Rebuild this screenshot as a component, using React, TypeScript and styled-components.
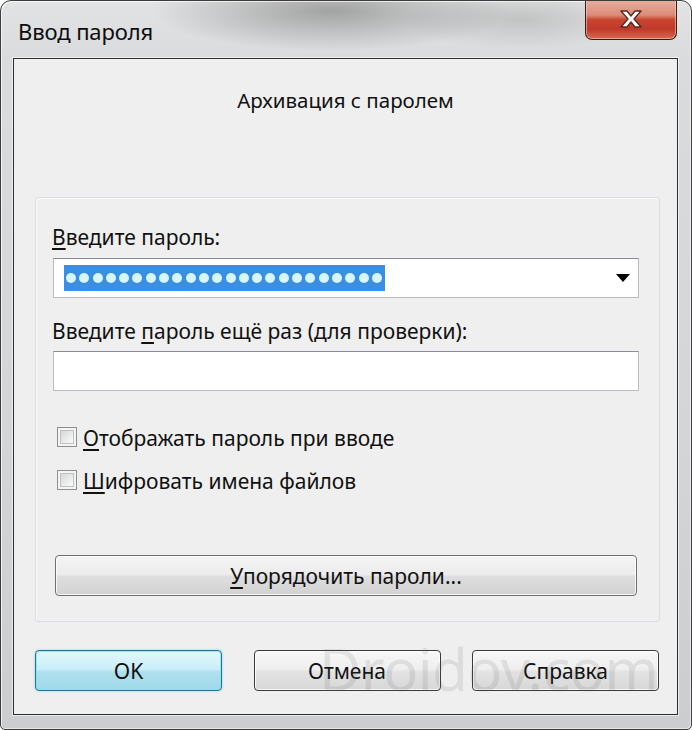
import React from "react";
import styled, { createGlobalStyle, css } from "styled-components";

const GlobalStyle = createGlobalStyle`
  html, body { margin: 0; padding: 0; background: #ffffff; }
  body { font-family: "Noto Sans", "DejaVu Sans", sans-serif; color: #111; }
  * { box-sizing: border-box; }
`;

const Window = styled.div`
  position: relative;
  width: 692px;
  height: 730px;
  border: 1px solid #3c3c3c;
  border-radius: 11px 11px 5px 5px;
  overflow: hidden;
  padding: 0 13px 14px 12px;
  display: flex;
  flex-direction: column;
  background:
    radial-gradient(ellipse 180px 40px at 330px 10px, rgba(110, 110, 110, 0.55), rgba(110, 110, 110, 0) 100%),
    radial-gradient(ellipse 120px 30px at 520px 18px, rgba(150, 150, 150, 0.4), rgba(150, 150, 150, 0) 100%),
    linear-gradient(180deg, #e2e3e4 0%, #d9dbdc 8%, #d3d5d7 60%, #cbcdcf 100%);
  box-shadow: inset 1px 1px 0 rgba(255, 255, 255, 0.7), inset -1px -1px 0 rgba(255, 255, 255, 0.5);
`;

const TitleBar = styled.div`
  height: 57px;
  flex: none;
  display: flex;
  align-items: flex-start;
  padding-left: 5px;
`;

const Title = styled.div`
  margin-top: 15px;
  font-size: 22px;
  line-height: 30px;
  color: #0d0d0d;
  letter-spacing: -0.1px;
`;

const CloseButton = styled.div`
  margin-left: auto;
  margin-right: 1px;
  margin-top: -2px;
  width: 92px;
  height: 41px;
  border: 1px solid #3b1c18;
  border-top: none;
  border-radius: 0 0 7px 7px;
  display: flex;
  align-items: center;
  justify-content: center;
  background: linear-gradient(180deg, #e9b0a2 0%, #dc8c78 40%, #c8452f 52%, #c0392a 75%, #d86a50 100%);
  box-shadow: inset 0 0 0 1px rgba(255, 210, 200, 0.55);
`;

const Client = styled.div`
  flex: 1;
  position: relative;
  display: flex;
  flex-direction: column;
  background: #efefef;
  border: 1px solid #2e2e2e;
  box-shadow: 0 0 0 1px rgba(255, 255, 255, 0.6);
`;

const Header = styled.div`
  height: 138px;
  flex: none;
  padding-top: 26px;
  text-align: center;
  font-size: 20.5px;
  line-height: 30px;
  color: #111;
`;

const Panel = styled.div`
  margin: 0 17px 0 21px;
  height: 425px;
  flex: none;
  display: flex;
  flex-direction: column;
  padding: 25px 20px 0 16px;
  border: 1px solid #d7dde2;
  border-radius: 3px;
  box-shadow: inset 1px 1px 0 #fafafa;
`;

const Label = styled.div<{ $gap: number }>`
  margin-top: ${(p) => p.$gap}px;
  font-size: 21px;
  line-height: 28px;
  color: #111;
  white-space: nowrap;
`;

const Key = styled.span`
  text-decoration: underline;
  text-underline-offset: 3px;
  text-decoration-thickness: 1.5px;
`;

const Field = styled.div<{ $gap: number }>`
  margin-top: ${(p) => p.$gap}px;
  margin-left: 1px;
  height: 40px;
  display: flex;
  align-items: center;
  padding: 0 10px;
  background: #ffffff;
  border: 1px solid #b9bcc2;
  border-top-color: #8a8d93;
`;

const Selection = styled.div`
  height: 26px;
  display: flex;
  align-items: center;
  gap: 3.3px;
  padding: 0 3px 0 2px;
  background: #3a8fe3;
`;

const Dot = styled.span`
  width: 10px;
  height: 10px;
  border-radius: 50%;
  background: #d6f6ff;
`;

const Arrow = styled.svg`
  margin-left: auto;
  margin-right: -3px;
`;

const CheckRow = styled.div<{ $gap: number }>`
  margin-top: ${(p) => p.$gap}px;
  margin-left: 5px;
  height: 28px;
  display: flex;
  align-items: center;
  gap: 6px;
  font-size: 21px;
  color: #111;
  white-space: nowrap;
`;

const CheckBox = styled.span`
  flex: none;
  width: 20px;
  height: 20px;
  margin-top: -3px;
  border: 1px solid #8e8f8f;
  background: #f4f4f4;
  padding: 2px;
  display: flex;
  &::after {
    content: "";
    flex: 1;
    border: 1px solid #bfc1c3;
    background: linear-gradient(135deg, #d6d7d9 0%, #eceded 60%, #fbfbfb 100%);
  }
`;

const buttonBase = css`
  height: 41px;
  border-radius: 4px;
  display: flex;
  align-items: center;
  justify-content: center;
  font-size: 21px;
  color: #111;
  font-family: "Noto Sans", "DejaVu Sans", sans-serif;
`;

const WideButton = styled.div`
  ${buttonBase};
  margin: 60px 2px 0 3px;
  border: 1px solid #6f6f6f;
  background: linear-gradient(180deg, #f4f4f4 0%, #ececec 48%, #dedede 52%, #d2d2d2 100%);
  box-shadow: inset 0 0 0 1px rgba(255, 255, 255, 0.8);
`;

const Footer = styled.div`
  position: relative;
  margin-top: 28px;
  padding: 0 18px 0 21px;
  display: flex;
  justify-content: space-between;
`;

const DialogButton = styled.div<{ $default?: boolean }>`
  ${buttonBase};
  width: 187px;
  border: 1px solid ${(p) => (p.$default ? "#2b6f8c" : "#3a3a3a")};
  background: ${(p) =>
    p.$default
      ? "linear-gradient(180deg, #e4f7fc 0%, #c9eef8 46%, #aee0ee 54%, #9fd9ea 100%)"
      : "linear-gradient(180deg, #f7f7f7 0%, #efefef 46%, #e2e2e2 54%, #d7d7d7 100%)"};
  box-shadow: ${(p) =>
    p.$default
      ? "inset 0 0 0 1px rgba(120, 230, 255, 0.7), 0 0 3px rgba(90, 200, 240, 0.6)"
      : "inset 0 0 0 1px rgba(255, 255, 255, 0.85)"};
`;

const Watermark = styled.div`
  position: absolute;
  left: 318px;
  top: 633px;
  font-size: 58px;
  line-height: 70px;
  color: rgba(90, 90, 90, 0.13);
  letter-spacing: -0.5px;
  pointer-events: none;
`;

export default function App() {
  const dots = Array.from({ length: 24 });
  return (
    <>
      <GlobalStyle />
      <Window>
        <TitleBar>
          <Title>Ввод пароля</Title>
          <CloseButton>
            <svg width="30" height="22" viewBox="0 0 30 22">
              <path
                d="M5 3 H11 L15 8 L19 3 H25 L18 11 L25 19 H19 L15 14 L11 19 H5 L12 11 Z"
                fill="#ffffff"
                stroke="#5a2a22"
                strokeWidth="1.4"
                strokeLinejoin="round"
              />
            </svg>
          </CloseButton>
        </TitleBar>
        <Client>
          <Header>Архивация с паролем</Header>
          <Panel>
            <Label $gap={0}>
              <Key>В</Key>ведите пароль:
            </Label>
            <Field $gap={7}>
              <Selection>
                {dots.map((_, i) => (
                  <Dot key={i} />
                ))}
              </Selection>
              <Arrow width="16" height="10" viewBox="0 0 16 10">
                <path d="M1 1 H15 L8 9 Z" fill="#000" />
              </Arrow>
            </Field>
            <Label $gap={19}>
              Введите <Key>п</Key>ароль ещё раз (для проверки):
            </Label>
            <Field $gap={6} />
            <CheckRow $gap={33}>
              <CheckBox />
              <span>
                <Key>О</Key>тображать пароль при вводе
              </span>
            </CheckRow>
            <CheckRow $gap={15}>
              <CheckBox />
              <span>
                <Key>Ш</Key>ифровать имена файлов
              </span>
            </CheckRow>
            <WideButton>
              <span>
                <Key>У</Key>порядочить пароли...
              </span>
            </WideButton>
          </Panel>
          <Footer>
            <DialogButton $default>OK</DialogButton>
            <DialogButton>Отмена</DialogButton>
            <DialogButton>Справка</DialogButton>
          </Footer>
        </Client>
        <Watermark>Droidov.com</Watermark>
      </Window>
    </>
  );
}
